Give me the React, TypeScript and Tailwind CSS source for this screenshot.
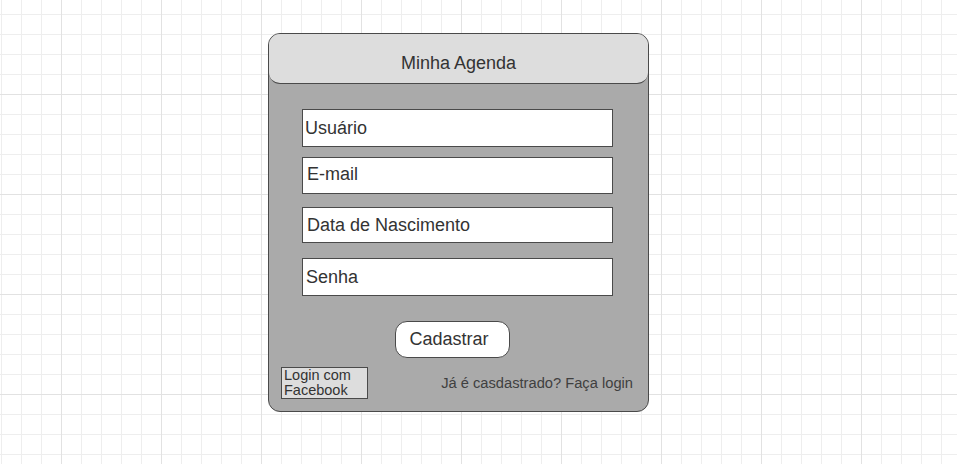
const fields = [
  { label: "Usuário", box: "mt-[25px] h-[38px] pl-[2px]" },
  { label: "E-mail", box: "mt-[10px] h-[37px] pl-[4px] pb-[2px]" },
  { label: "Data de Nascimento", box: "mt-[13px] h-[36px] pl-[4px]" },
  { label: "Senha", box: "mt-[15px] h-[38px] pl-[3px]" },
];

export default function App() {
  return (
    <div
      className="w-[957px] h-[464px] overflow-hidden bg-white pt-[33px] pl-[268px] bg-[linear-gradient(to_right,#e2e2e2_1px,transparent_1px),linear-gradient(to_bottom,#e2e2e2_1px,transparent_1px),linear-gradient(to_right,#eeeeee_1px,transparent_1px),linear-gradient(to_bottom,#eeeeee_1px,transparent_1px)] bg-[size:100px_100px,100px_100px,20px_20px,20px_20px] bg-[position:61px_94px,61px_94px,1px_14px,1px_14px]"
      style={{ fontFamily: '"Liberation Sans", Arial, sans-serif' }}
    >
      {/* ── Card ─────────────────────────────────────── */}
      <div className="w-[381px] h-[379px] rounded-[12px] border border-[#4a4a4a] bg-[#aaaaaa] overflow-hidden flex flex-col">
        <div className="h-[50px] shrink-0 bg-[#dddddd] border-b border-[#4a4a4a] rounded-b-[11px] flex items-center justify-center pt-[9px]">
          <span className="text-[18px] leading-[20px] text-[#333333]">Minha Agenda</span>
        </div>

        {fields.map((f) => (
          <div
            key={f.label}
            className={`ml-[33px] w-[311px] shrink-0 bg-white border border-[#4a4a4a] flex items-center text-[18px] text-[#333333] ${f.box}`}
          >
            {f.label}
          </div>
        ))}

        <button className="mt-[25px] ml-[126px] w-[115px] h-[37px] shrink-0 rounded-[12px] bg-white border border-[#4a4a4a] text-[18px] text-[#333333] flex items-center justify-center pr-[7px]">
          Cadastrar
        </button>

        <div className="mt-[9px] flex justify-between">
          <div className="ml-[12px] w-[87px] h-[32px] bg-[#dddddd] border border-[#4a4a4a] pl-[2px] text-[14.5px] leading-[15px] text-[#333333]">
            Login com
            <br />
            Facebook
          </div>
          <span className="mt-[8px] mr-[15px] text-[14.7px] leading-[17px] text-[#404040]">
            Já é casdastrado? Faça login
          </span>
        </div>
      </div>
    </div>
  );
}
